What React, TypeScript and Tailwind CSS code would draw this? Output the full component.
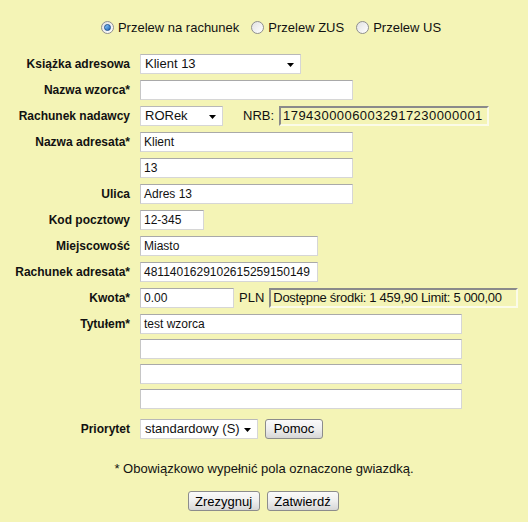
const Radio = ({ checked, label }: { checked?: boolean; label: string }) => (
  <label className="flex items-center gap-[4px]">
    <span className="flex h-[13px] w-[13px] items-center justify-center rounded-full border border-[#8f8f8f] bg-gradient-to-br from-[#e2e2e2] to-[#ffffff]">
      {checked && (
        <span className="h-[7px] w-[7px] rounded-full bg-gradient-to-br from-[#8fd0ff] to-[#1d5fb5] border border-[#1c4f8f]" />
      )}
    </span>
    <span>{label}</span>
  </label>
);

const Row = ({
  label,
  children,
  top,
}: {
  label?: string;
  children: React.ReactNode;
  top?: boolean;
}) => (
  <div className={`flex ${top ? "items-start" : "items-center"}`}>
    <div
      className={`w-[130px] shrink-0 text-right text-[12px] font-bold ${top ? "pt-[1px]" : ""}`}
    >
      {label}
    </div>
    <div className="ml-[10px] flex items-center">{children}</div>
  </div>
);

const TextBox = ({ value = "", width }: { value?: string; width: string }) => (
  <div
    className={`${width} flex h-[20px] items-center border border-[#d6d6d6] border-t-[#a9a9a9] border-l-[#c6c6c6] bg-white pl-[3px] text-[12px] leading-none`}
  >
    {value}
  </div>
);

const Select = ({ value, width }: { value: string; width: string }) => (
  <div
    className={`${width} relative flex h-[20px] items-center border border-[#d6d6d6] border-t-[#b8b8b8] bg-white pl-[4px] text-[13px] leading-none`}
  >
    {value}
    <svg
      className="absolute right-[6px] top-[8px]"
      width="7"
      height="4"
      viewBox="0 0 7 4"
    >
      <path d="M0 0h7L3.5 4z" fill="#000" />
    </svg>
  </div>
);

const Btn = ({ children, width }: { children: React.ReactNode; width: string }) => (
  <button
    className={`${width} h-[20px] rounded-[3px] border border-[#8c8c8c] bg-gradient-to-b from-[#fafafa] via-[#eeeeee] to-[#d6d6d6] text-[13px] leading-none text-black`}
  >
    {children}
  </button>
);

const InsetBox = ({
  children,
  width,
  tracking,
}: {
  children: React.ReactNode;
  width: string;
  tracking: string;
}) => (
  <div
    className={`${width} ${tracking} flex h-[20px] items-center border-2 border-t-[#8a8a8a] border-l-[#8a8a8a] border-r-[#fbfbe8] border-b-[#fbfbe8] pl-[2px] text-[13px] leading-none`}
  >
    {children}
  </div>
);

export default function App() {
  return (
    <div className="h-[522px] w-[528px] bg-[#f4f4b6] font-['Liberation_Sans',Arial,sans-serif] text-[13px] text-[#111]">
      <div className="flex justify-center gap-[12px] pl-[14px] pt-[18px]">
        <Radio checked label="Przelew na rachunek" />
        <Radio label="Przelew ZUS" />
        <Radio label="Przelew US" />
      </div>

      <div className="mt-[16px] flex flex-col gap-[6px]">
        <Row label="Książka adresowa">
          <Select value="Klient 13" width="w-[161px]" />
        </Row>
        <Row label="Nazwa wzorca*">
          <TextBox width="w-[213px]" />
        </Row>
        <Row label="Rachunek nadawcy">
          <Select value="RORek" width="w-[83px]" />
          <span className="ml-[20px] mr-[5px]">NRB:</span>
          <InsetBox width="w-[210px]" tracking="tracking-[0.45px]">
            17943000060032917230000001
          </InsetBox>
        </Row>
        <Row label="Nazwa adresata*">
          <TextBox value="Klient" width="w-[213px]" />
        </Row>
        <Row>
          <TextBox value="13" width="w-[213px]" />
        </Row>
        <Row label="Ulica">
          <TextBox value="Adres 13" width="w-[213px]" />
        </Row>
        <Row label="Kod pocztowy">
          <TextBox value="12-345" width="w-[64px]" />
        </Row>
        <Row label="Miejscowość">
          <TextBox value="Miasto" width="w-[178px]" />
        </Row>
        <Row label="Rachunek adresata*">
          <TextBox value="4811401629102615259150149" width="w-[178px]" />
        </Row>
        <Row label="Kwota*">
          <TextBox value="0.00" width="w-[94px]" />
          <span className="ml-[5px] mr-[5px]">PLN</span>
          <InsetBox width="w-[249px]" tracking="tracking-[-0.3px]">
            Dostępne środki: 1 459,90 Limit: 5 000,00
          </InsetBox>
        </Row>
        <Row label="Tytułem*" top>
          <div className="flex flex-col gap-[5px]">
            <TextBox value="test wzorca" width="w-[322px]" />
            <TextBox width="w-[322px]" />
            <TextBox width="w-[322px]" />
            <TextBox width="w-[322px]" />
          </div>
        </Row>
      </div>

      <div className="mt-[10px]">
        <Row label="Priorytet">
          <Select value="standardowy (S)" width="w-[118px]" />
          <div className="ml-[7px]">
            <Btn width="w-[58px]">Pomoc</Btn>
          </div>
        </Row>
      </div>

      <div className="mt-[20px] text-center">
        * Obowiązkowo wypełnić pola oznaczone gwiazdką.
      </div>

      <div className="mt-[13px] flex justify-center gap-[7px] pr-[2px]">
        <Btn width="w-[72px]">Zrezygnuj</Btn>
        <Btn width="w-[72px]">Zatwierdź</Btn>
      </div>
    </div>
  );
}
